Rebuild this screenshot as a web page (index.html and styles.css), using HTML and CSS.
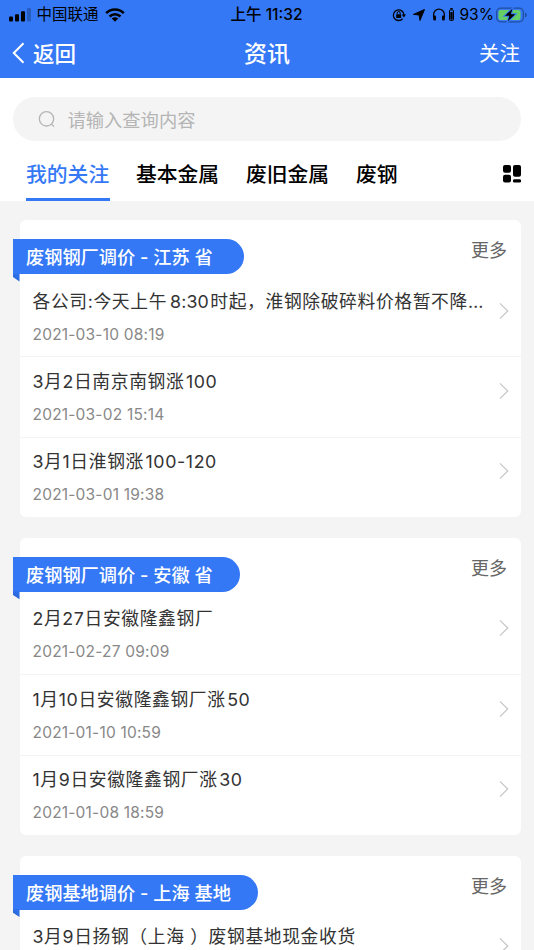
FILE: index.html
```html
<!DOCTYPE html>
<html lang="zh-CN">
<head>
<meta charset="utf-8">
<meta name="viewport" content="width=device-width">
<title>资讯</title>
<link rel="stylesheet" href="styles.css">
</head>
<body>
<svg class="defs" width="0" height="0"><symbol id="chev" viewBox="0 0 10 18"><path d="M1 1.4 8.7 9 1 16.6" fill="none" stroke="#c8c8c8" stroke-width="1.3"/></symbol></svg>
<header class="top">
  <div class="status">
    <div class="status-left">
      <svg width="22" height="14" viewBox="0 0 22 14"><rect x="0" y="8.5" width="4" height="5" rx="1"/><rect x="6" y="6.2" width="4" height="7.3" rx="1"/><rect x="12" y="3.2" width="4" height="10.3" rx="1"/><rect x="18" y="0" width="4" height="13.5" rx="1" opacity=".22"/></svg>
      <span class="carrier">中国联通</span>
      <svg width="20" height="14" viewBox="0 0 20 14" fill="none" stroke="#000" stroke-width="2.6"><path d="M1.2 5.1C6.2.2 13.8.2 18.8 5.1M4.5 8.5C7.7 5.4 12.3 5.4 15.5 8.5"/><path d="M10 13.8 6.7 10.6Q10 8 13.3 10.6Z" fill="#000" stroke="none"/></svg>
    </div>
    <div class="clock">上午 11:32</div>
    <div class="status-right">
      <svg width="14" height="14" viewBox="0 0 14 14"><path d="M10.6 10.8A5.3 5.3 0 1 1 12 7" fill="none" stroke="#000" stroke-width="1.3"/><path d="M9.8 6.6h4.2l-2.1 2.8z"/><rect x="4.2" y="6.2" width="5" height="3.8" rx=".6"/><path d="M5.2 6.2V5a1.5 1.5 0 0 1 3 0v1.2" fill="none" stroke="#000"/></svg>
      <svg class="loc" width="12" height="12" viewBox="0 0 12 12"><path d="M11.6.4 7 11.5 6.1 6 .4 5.4Z" stroke="#000" stroke-width=".9" stroke-linejoin="round"/></svg>
      <svg class="phones" width="14" height="13" viewBox="0 0 14 13"><path d="M1.6 9.5V6.6a5.4 5.4 0 0 1 10.8 0V9.5" fill="none" stroke="#000" stroke-width="1.3"/><rect x="1.2" y="7.4" width="2.8" height="5" rx="1"/><rect x="10" y="7.4" width="2.8" height="5" rx="1"/></svg>
      <svg class="cell" width="5" height="13" viewBox="0 0 5 13"><rect x=".5" y="2" width="4" height="10.5" rx="1" fill="none" stroke="#000"/><rect x="1.2" y="0" width="2.6" height="1.5" rx=".5"/><rect x="1.3" y="4" width="2.4" height="7.7"/></svg>
      <span class="percent">93%</span>
      <svg class="battery" width="31" height="16" viewBox="0 0 31 16"><rect x=".7" y="1.2" width="26.6" height="13.6" rx="4" fill="none" stroke="#214d9e" stroke-width="1.3"/><path d="M29 5.5q1.8.7 1.8 2.5T29 10.5z" fill="#214d9e"/><rect x="2.5" y="3" width="22" height="10" rx="2" fill="#65cf66"/><path d="M16.4 1.7 9 8.8h4.4L11.8 14.3 19.2 7.2h-4.4z" stroke="#3478f6" stroke-width="2" paint-order="stroke"/></svg>
    </div>
  </div>
  <nav class="bar">
    <a class="back"><svg width="13" height="22" viewBox="0 0 13 22"><path d="M11.5 1.3 1.8 11l9.7 9.7" fill="none" stroke="#fff" stroke-width="2"/></svg><span>返回</span></a>
    <h1>资讯</h1>
    <a class="follow">关注</a>
  </nav>
</header>
<section class="tools">
  <div class="search"><svg width="18" height="18" viewBox="0 0 18 18" fill="none" stroke="#b5b5b5" stroke-width="1.3"><circle cx="8.5" cy="8.8" r="7.2"/><path d="m13.2 13.8 2.8 2.8"/></svg><span>请输入查询内容</span></div>
  <div class="tabs">
    <a class="tab active">我的关注</a><a class="tab">基本金属</a><a class="tab">废旧金属</a><a class="tab">废钢</a>
    <svg class="grid" width="18" height="18" viewBox="0 0 18 18"><rect width="8" height="7.8" rx="2"/><rect y="9.8" width="8" height="7.8" rx="2"/><rect x="10" width="8" height="11.7" rx="2"/><rect x="10" y="14.2" width="8" height="3.4" rx="1.4"/></svg>
  </div>
</section>
<main class="feed">
  <section class="card">
    <div class="card-head"><h2 class="ribbon r1">废钢钢厂调价 - 江苏 省</h2><a class="more">更多</a></div>
    <article class="item"><div class="info"><h3>各公司:今天上午<span class="num">8:30</span>时起，淮钢除破碎料价格暂不降…</h3><time>2021-03-10 08:19</time></div><svg class="chev"><use href="#chev"/></svg></article>
    <article class="item"><div class="info"><h3>3月2日南京南钢涨<span class="end">100</span></h3><time>2021-03-02 15:14</time></div><svg class="chev"><use href="#chev"/></svg></article>
    <article class="item"><div class="info"><h3>3月1日淮钢涨<span class="end">100-120</span></h3><time>2021-03-01 19:38</time></div><svg class="chev"><use href="#chev"/></svg></article>
  </section>
  <section class="card">
    <div class="card-head"><h2 class="ribbon r2">废钢钢厂调价 - 安徽 省</h2><a class="more">更多</a></div>
    <article class="item"><div class="info"><h3>2月27日安徽隆鑫钢厂</h3><time>2021-02-27 09:09</time></div><svg class="chev"><use href="#chev"/></svg></article>
    <article class="item"><div class="info"><h3>1月10日安徽隆鑫钢厂涨<span class="end">50</span></h3><time>2021-01-10 10:59</time></div><svg class="chev"><use href="#chev"/></svg></article>
    <article class="item"><div class="info"><h3>1月9日安徽隆鑫钢厂涨<span class="end">30</span></h3><time>2021-01-08 18:59</time></div><svg class="chev"><use href="#chev"/></svg></article>
  </section>
  <section class="card">
    <div class="card-head"><h2 class="ribbon r3">废钢基地调价 - 上海 基地</h2><a class="more">更多</a></div>
    <article class="item"><div class="info"><h3>3月9日扬钢（上海 ）废钢基地现金收货</h3></div><svg class="chev"><use href="#chev"/></svg></article>
  </section>
</main>
</body>
</html>
```
FILE: styles.css
```css
* { box-sizing: border-box; }
html { height: 100%; overflow: hidden; }
body { height: 100%; display: flex; flex-direction: column; overflow: hidden; margin: 0; background: #f4f4f4; font-family: Inter, "Noto Sans CJK SC", sans-serif; color: #333; }
h1, h2, h3 { margin: 0; font-weight: 400; }
svg { display: block; flex: none; }
.defs { position: absolute; }

.top { flex: none; height: 77.5px; background: #3478f6; }
.status { height: 27px; display: grid; grid-template-columns: 1fr auto 1fr; align-items: center; padding: 0 5px 0 9px; color: #000; line-height: 29px; }
.status-left, .status-right { display: flex; align-items: center; }
.status-right { justify-content: flex-end; }
.carrier { font-size: 15.5px; margin: 0 6px 0 5.5px; }
.clock { font-size: 15.5px; font-weight: 500; padding-right: 5px; }
.loc { margin-left: 7px; }
.phones { margin-left: 7px; }
.cell { margin-left: 3px; }
.percent { font-size: 15.6px; margin: 0 2px 0 5px; }
.battery { margin-right: 2px; }

.bar { height: 50px; display: grid; grid-template-columns: 1fr auto 1fr; align-items: center; padding: 0 14px 0 12px; color: #fff; line-height: 50px; }
.back { display: flex; align-items: center; gap: 8px; font-size: 21.5px; font-weight: 500; }
.bar h1 { font-size: 23px; font-weight: 500; padding: 1px 0 0 2px; }
.back span, .follow { padding-top: 2px; }
.follow { justify-self: end; font-size: 20.5px; }

.tools { flex: none; height: 123.5px; padding: 19.5px 13px 0; background: #fff; }
.search { height: 43.5px; border-radius: 22px; background: #f4f4f4; display: flex; align-items: center; gap: 11.5px; padding-left: 25px; font-size: 18.3px; color: #b5b5b5; }
.tabs { height: 60.5px; display: flex; gap: 26px; padding-left: 13px; }
.tab { height: 60.5px; line-height: 67px; font-size: 20.8px; font-weight: 500; color: #000; border-bottom: 3px solid transparent; padding-right: .8px; }
.tab.active { color: #3478f6; border-color: #3478f6; }
.grid { margin: 24.5px .5px 0 auto; }

.feed { flex: 1; min-height: 0; overflow: hidden; padding: 19px 13px 0 0; }
.card { background: #fff; border-radius: 6px; margin: 0 0 20.5px 19.5px; height: 297.3px; }
.card-head { height: 57px; display: flex; justify-content: space-between; align-items: flex-start; padding: 19px 14px 0 0; }
.ribbon { position: relative; height: 35px; line-height: 36px; margin-left: -6.5px; padding: 0 0 0 13px; border-radius: 0 17.5px 17.5px 0; background: #3478f6; color: #fff; font-size: 18.2px; font-weight: 500; white-space: nowrap; }
.ribbon::after { content: ""; position: absolute; left: 0; top: calc(100% - .5px); width: 6.5px; height: 8px; background: linear-gradient(35deg, #2057bd, #2e6fe8 60%); clip-path: polygon(0 0, 100% 0, 100% 100%, 0 45%); }
.r1 { width: 231px; }
.r2 { width: 227px; }
.r3 { width: 245px; }
.more { font-size: 18px; line-height: 24px; color: #666; }
.item { height: 80.4px; display: flex; align-items: flex-start; padding: 0 12.5px 0 13px; border-bottom: 1.3px solid #f4f4f4; }
.item:last-child { border-bottom: 0; }
.info { width: 460px; padding-top: 10.6px; }
.info h3 { font-size: 17.8px; letter-spacing: .62px; line-height: 28px; white-space: nowrap; }
.num { margin: 0 1.5px 0 3px; letter-spacing: .1px; }
.end { margin-left: 1.5px; }
.info time { display: block; margin-top: 8px; font-size: 15.5px; letter-spacing: .2px; line-height: 22px; color: #888; }
.chev { width: 10px; height: 18px; margin: 24.5px 0 0 auto; }
```
